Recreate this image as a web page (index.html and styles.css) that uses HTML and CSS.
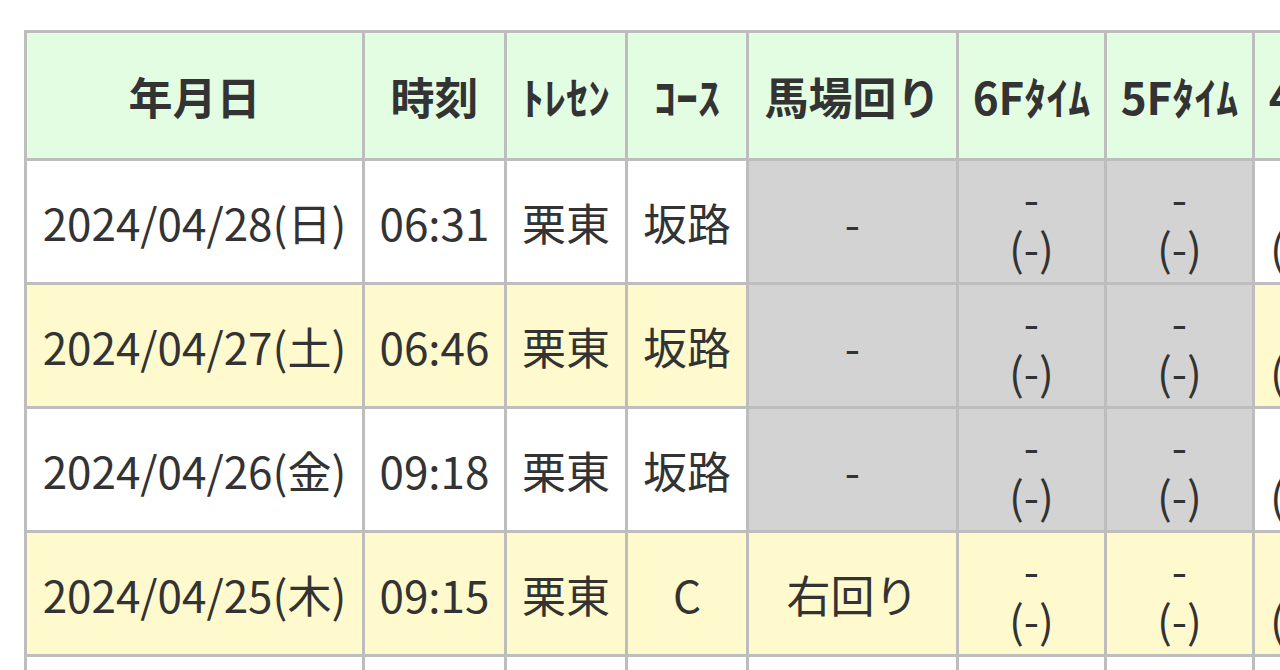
FILE: index.html
```html
<!DOCTYPE html>
<html lang="ja">
<head>
<meta charset="utf-8">
<title>調教タイム</title>
<link rel="stylesheet" href="styles.css">
</head>
<body>
<table class="train">
  <colgroup>
    <col class="c-date">
    <col class="c-time">
    <col class="c-tc">
    <col class="c-course">
    <col class="c-turn">
    <col class="c-f">
    <col class="c-f">
    <col class="c-f">
  </colgroup>
  <thead>
    <tr>
      <th>年月日</th>
      <th>時刻</th>
      <th>ﾄﾚｾﾝ</th>
      <th>ｺｰｽ</th>
      <th>馬場回り</th>
      <th>6Fﾀｲﾑ</th>
      <th>5Fﾀｲﾑ</th>
      <th>4Fﾀｲﾑ</th>
    </tr>
  </thead>
  <tbody>
    <tr>
      <td>2024/04/28(日)</td>
      <td>06:31</td>
      <td>栗東</td>
      <td>坂路</td>
      <td class="na">-</td>
      <td class="na">-<br>(-)</td>
      <td class="na">-<br>(-)</td>
      <td>55.4<br>(13.2)</td>
    </tr>
    <tr class="alt">
      <td>2024/04/27(土)</td>
      <td>06:46</td>
      <td>栗東</td>
      <td>坂路</td>
      <td class="na">-</td>
      <td class="na">-<br>(-)</td>
      <td class="na">-<br>(-)</td>
      <td>56.1<br>(13.8)</td>
    </tr>
    <tr>
      <td>2024/04/26(金)</td>
      <td>09:18</td>
      <td>栗東</td>
      <td>坂路</td>
      <td class="na">-</td>
      <td class="na">-<br>(-)</td>
      <td class="na">-<br>(-)</td>
      <td>54.9<br>(12.9)</td>
    </tr>
    <tr class="alt">
      <td>2024/04/25(木)</td>
      <td>09:15</td>
      <td>栗東</td>
      <td>C</td>
      <td>右回り</td>
      <td>-<br>(-)</td>
      <td>-<br>(-)</td>
      <td>53.2<br>(12.4)</td>
    </tr>
    <tr>
      <td>2024/04/24(水)</td>
      <td>07:05</td>
      <td>栗東</td>
      <td>CW</td>
      <td>右回り</td>
      <td>83.1<br>(13.9)</td>
      <td>67.4<br>(13.0)</td>
      <td>52.6<br>(12.1)</td>
    </tr>
  </tbody>
</table>
</body>
</html>
```
FILE: styles.css
```css
html, body {
  margin: 0;
  padding: 0;
  background: #ffffff;
  overflow: hidden;
}

body {
  padding: 30px 0 0 24px;
  font-family: "Noto Sans CJK JP", "Noto Sans", sans-serif;
  color: #333333;
}

.train {
  border-collapse: separate;
  border-spacing: 0;
  table-layout: fixed;
  width: 1379px;
  border-left: 3px solid #bdbdbd;
  border-top: 3px solid #bdbdbd;
  font-size: 44px;
  line-height: 50px;
}

.train th,
.train td {
  box-sizing: border-box;
  border-right: 3px solid #bdbdbd;
  border-bottom: 3px solid #bdbdbd;
  padding: 0;
  text-align: center;
  vertical-align: middle;
  white-space: nowrap;
  overflow: hidden;
}

.train th {
  height: 128px;
  background: #e3fde3;
  font-weight: bold;
  color: #333333;
}

.train td {
  height: 124px;
  background: #ffffff;
  font-weight: normal;
}

.train tr.alt td {
  background: #fffacd;
}

.train tr td.na,
.train tr.alt td.na {
  background: #d3d3d3;
}

.c-date { width: 338px; }
.c-time { width: 142px; }
.c-tc { width: 121px; }
.c-course { width: 121px; }
.c-turn { width: 210px; }
.c-f { width: 148px; }
```
